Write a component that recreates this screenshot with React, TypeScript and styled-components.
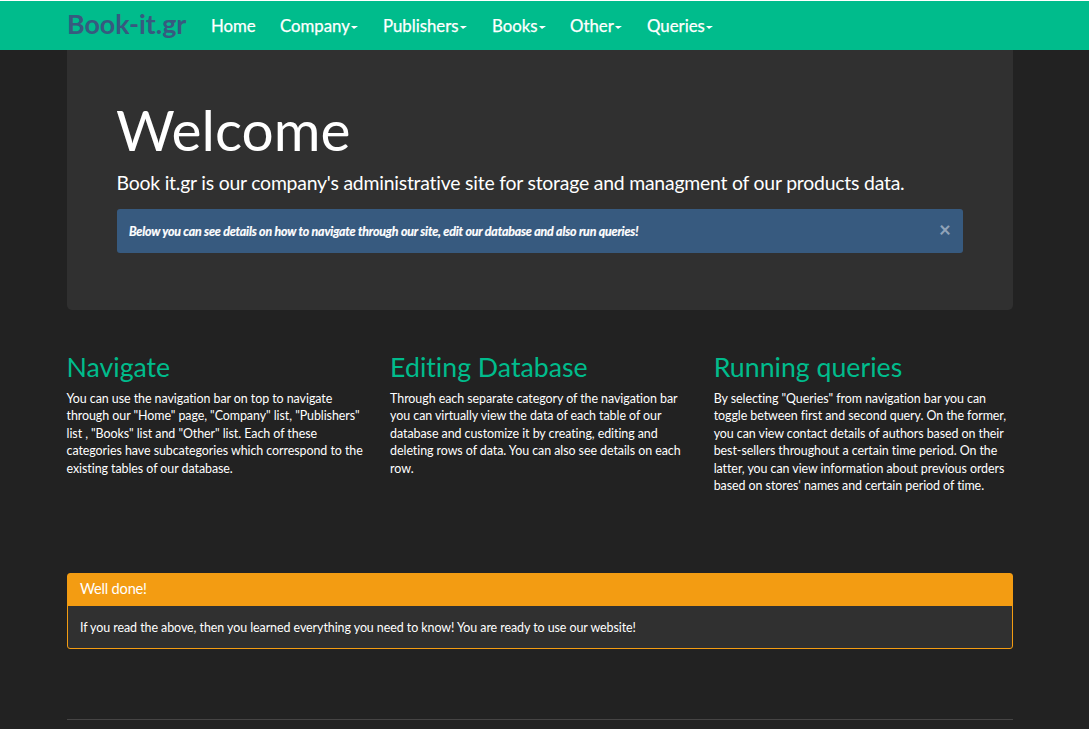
import React from "react";
import styled, { createGlobalStyle } from "styled-components";

const GlobalStyle = createGlobalStyle`
  * { box-sizing: border-box; }
  html { background: #222; }
  body {
    margin: 0;
    height: 729px;
    overflow: hidden;
    background: #222;
    color: #fff;
    font-family: Lato, "Liberation Sans", sans-serif;
    font-size: 12.45px;
    line-height: 17.5px;
    letter-spacing: -0.06px;
    font-variant-ligatures: none;
  }
  h1, h2, h3, p { margin: 0; font-weight: 400; }
`;

const Container = styled.div`
  width: 946px;
  margin-left: 67px;
`;

const Navbar = styled.header`
  height: 50px;
  background: #00bc8c;
  border-top: 1px solid #fff;
  letter-spacing: 0;
`;

const NavInner = styled(Container)`
  display: flex;
  align-items: center;
  height: 49px;
`;

const Brand = styled.a`
  width: 144px;
  margin-top: -3px;
  color: #375a7f;
  font-size: 26.8px;
  font-weight: 700;
  line-height: 32px;
`;

const NavLink = styled.a<{ $width: number }>`
  display: flex;
  align-items: center;
  width: ${(p) => p.$width}px;
  padding-top: 1px;
  font-size: 16.8px;
  line-height: 22px;
  white-space: nowrap;
  -webkit-text-stroke: 0.25px #fff;
`;

const Caret = styled.span`
  margin: 2px 0 0 1px;
  border-top: 3px solid #fff;
  border-left: 3px solid transparent;
  border-right: 4px solid transparent;
`;

const Jumbotron = styled.section`
  height: 260px;
  padding: 48px 50px 0;
  background: #303030;
  border-radius: 0 0 5px 5px;
`;

const Title = styled.h1`
  margin-left: -1px;
  font-size: 56.8px;
  line-height: 62px;
  letter-spacing: 0;
`;

const Lead = styled.p`
  margin: 10px 0 0 -0.5px;
  font-size: 19.4px;
  line-height: 26px;
  letter-spacing: -0.21px;
  white-space: nowrap;
`;

const Alert = styled.div`
  display: flex;
  justify-content: space-between;
  height: 44px;
  margin-top: 13px;
  padding: 13px 12px 0;
  background: #375a7f;
  border-radius: 3px;
`;

const AlertText = styled.em`
  padding-top: 0.5px;
  font-weight: 700;
  letter-spacing: -0.19px;
  white-space: nowrap;
  -webkit-text-stroke: 0.2px #fff;
`;

const Close = styled.button`
  align-self: flex-start;
  padding: 0;
  border: 0;
  background: none;
  color: #fff;
  opacity: 0.45;
  font: 700 20.5px/15px Lato, sans-serif;
`;

const Columns = styled.section`
  display: grid;
  grid-template-columns: repeat(3, 323.6px);
  height: 213px;
  margin-top: 40px;
`;

const Heading = styled.h2`
  margin-left: -0.5px;
  color: #00bc8c;
  font-size: 26.7px;
  line-height: 34px;
  letter-spacing: 0;
`;

const Copy = styled.p`
  margin: 5.5px 0 0 -0.5px;
  white-space: pre-line;
`;

const Panel = styled.section`
  height: 76px;
  margin-top: 10px;
  background: #303030;
  border: 1px solid #f39c12;
  border-radius: 3px;
`;

const PanelHeading = styled.h3`
  height: 32px;
  padding: 6px 12px 0;
  background: #f39c12;
  font-size: 14.6px;
  line-height: 18px;
  letter-spacing: -0.2px;
`;

const PanelBody = styled.p`
  padding: 13px 12px;
`;

const Divider = styled.hr`
  margin: 70px 0 0;
  border: 0;
  border-top: 1px solid #464545;
`;

const links = [
  { label: "Home", width: 69 },
  { label: "Company", width: 103, menu: true },
  { label: "Publishers", width: 109, menu: true },
  { label: "Books", width: 78, menu: true },
  { label: "Other", width: 77, menu: true },
  { label: "Queries", width: 80, menu: true },
];

const topics = [
  {
    title: "Navigate",
    lines: [
      "You can use the navigation bar on top to navigate",
      'through our "Home" page, "Company" list, "Publishers"',
      'list , "Books" list and "Other" list. Each of these',
      "categories have subcategories which correspond to the",
      "existing tables of our database.",
    ],
  },
  {
    title: "Editing Database",
    lines: [
      "Through each separate category of the navigation bar",
      "you can virtually view the data of each table of our",
      "database and customize it by creating, editing and",
      "deleting rows of data. You can also see details on each",
      "row.",
    ],
  },
  {
    title: "Running queries",
    lines: [
      'By selecting "Queries" from navigation bar you can',
      "toggle between first and second query. On the former,",
      "you can view contact details of authors based on their",
      "best-sellers throughout a certain time period. On the",
      "latter, you can view information about previous orders",
      "based on stores' names and certain period of time.",
    ],
  },
];

export default function App() {
  return (
    <>
      <GlobalStyle />
      <Navbar>
        <NavInner as="nav">
          <Brand>Book-it.gr</Brand>
          {links.map((link) => (
            <NavLink key={link.label} $width={link.width}>
              {link.label}
              {link.menu && <Caret />}
            </NavLink>
          ))}
        </NavInner>
      </Navbar>
      <Container as="main">
        <Jumbotron>
          <Title>Welcome</Title>
          <Lead>
            Book it.gr is our company's administrative site for storage and managment of our products data.
          </Lead>
          <Alert>
            <AlertText>
              Below you can see details on how to navigate through our site, edit our database and also run queries!
            </AlertText>
            <Close aria-label="Close">×</Close>
          </Alert>
        </Jumbotron>
        <Columns>
          {topics.map((topic) => (
            <article key={topic.title}>
              <Heading>{topic.title}</Heading>
              <Copy>{topic.lines.join("\n")}</Copy>
            </article>
          ))}
        </Columns>
        <Panel>
          <PanelHeading>Well done!</PanelHeading>
          <PanelBody>
            If you read the above, then you learned everything you need to know! You are ready to use our website!
          </PanelBody>
        </Panel>
        <Divider />
      </Container>
    </>
  );
}
